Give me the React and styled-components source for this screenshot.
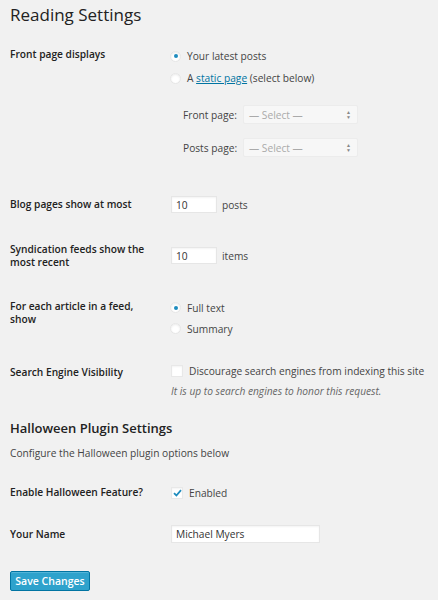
import React from 'react'
import styled, { createGlobalStyle } from 'styled-components'

const GlobalStyle = createGlobalStyle`
  html, body {
    margin: 0;
    background: #f1f1f1;
  }
  body {
    font-family: "Open Sans", "Liberation Sans", sans-serif;
    color: #444;
    font-size: 10.2px;
  }
`

const Page = styled.div`
  padding: 3px 0 10px 10px;
  width: 438px;
  box-sizing: border-box;
`

const Title = styled.h1`
  margin: 0;
  font-size: 17px;
  line-height: 24px;
  font-weight: 400;
  color: #222;
`

const Row = styled.div`
  display: grid;
  grid-template-columns: 161px 1fr;
  align-items: start;
  margin-top: ${({ $top }) => $top}px;
`

const Label = styled.div`
  font-weight: 600;
  color: #222;
  line-height: 13px;
  padding-top: ${({ $pad }) => $pad || 0}px;
  padding-right: 10px;
`

const Field = styled.div`
  display: flex;
  flex-direction: column;
`

const Option = styled.label`
  display: flex;
  align-items: center;
  gap: 6px;
  height: ${({ $h }) => $h || 22}px;
  line-height: 14px;
  white-space: nowrap;
`

const Radio = styled.span`
  width: 11px;
  height: 11px;
  border-radius: 50%;
  background: #fff;
  box-shadow: inset 0 1px 2px rgba(0, 0, 0, 0.08);
  border: 1px solid #e6e6e6;
  margin-left: -1px;
  display: flex;
  align-items: center;
  justify-content: center;
  box-sizing: border-box;

  &::after {
    content: '';
    width: 4px;
    height: 4px;
    border-radius: 50%;
    background: ${({ $checked }) => ($checked ? '#1e8cbe' : 'transparent')};
  }
`

const Check = styled.span`
  width: 12px;
  height: 12px;
  background: #fff;
  border: 1px solid #e8e8e8;
  box-sizing: border-box;
  box-shadow: inset 0 1px 2px rgba(0, 0, 0, 0.05);
  display: flex;
  align-items: center;
  justify-content: center;
`

const Link = styled.a`
  color: #0074a2;
  text-decoration: underline;
`

const SubSelects = styled.div`
  display: flex;
  flex-direction: column;
  gap: 14px;
  margin-top: 16px;
  padding-left: 12px;
`

const SelectRow = styled.div`
  display: flex;
  align-items: center;
`

const SelectLabel = styled.span`
  width: 60px;
`

const Select = styled.div`
  width: 115px;
  height: 19px;
  box-sizing: border-box;
  background: #f7f7f7;
  border: 1px solid #ececec;
  border-radius: 2px;
  display: flex;
  align-items: center;
  justify-content: space-between;
  padding: 0 6px 0 5px;
  color: #aaa;
`

const Arrows = styled.span`
  display: flex;
  flex-direction: column;
  align-items: center;
  gap: 1px;
  color: #888;
  font-size: 5px;
  line-height: 4px;
`

const InlineField = styled.div`
  display: flex;
  align-items: center;
  gap: 5px;
  margin-top: ${({ $top }) => $top || 0}px;
`

const Input = styled.div`
  width: ${({ $w }) => $w}px;
  height: ${({ $h }) => $h || 17}px;
  box-sizing: border-box;
  background: #fff;
  border: 1px solid #e6e6e6;
  box-shadow: inset 0 1px 2px rgba(0, 0, 0, 0.05);
  display: flex;
  align-items: center;
  padding-left: 4px;
  color: #333;
`

const Hint = styled.p`
  margin: 6px 0 0;
  font-style: italic;
  line-height: 14px;
  color: #666;
`

const Heading = styled.h2`
  margin: 21px 0 0;
  font-size: 13px;
  line-height: 18px;
  font-weight: 600;
  color: #222;
`

const Intro = styled.p`
  margin: 10px 0 0;
  line-height: 13px;
`

const Button = styled.button`
  margin-top: 28px;
  width: 80px;
  height: 20px;
  padding: 0;
  background: #2ea2cc;
  border: 1px solid #0074a2;
  border-radius: 2px;
  box-shadow: inset 0 1px 0 rgba(120, 200, 230, 0.5);
  color: #fff;
  font-family: inherit;
  font-size: 10.5px;
  font-weight: 600;
  display: block;
`

const Tick = () => (
  <svg width="9" height="8" viewBox="0 0 9 8">
    <path d="M1 4.2 L3.4 6.5 L8 1.2" fill="none" stroke="#1e8cbe" strokeWidth="1.8" />
  </svg>
)

const App = () => (
  <Page>
    <GlobalStyle />
    <Title>Reading Settings</Title>

    <Row $top={18}>
      <Label $pad={3}>Front page displays</Label>
      <Field>
        <Option><Radio $checked /><span>Your latest posts</span></Option>
        <Option><Radio /><span>A <Link>static page</Link> (select below)</span></Option>
        <SubSelects>
          <SelectRow>
            <SelectLabel>Front page:</SelectLabel>
            <Select>— Select —<Arrows><span>▲</span><span>▼</span></Arrows></Select>
          </SelectRow>
          <SelectRow>
            <SelectLabel>Posts page:</SelectLabel>
            <Select>— Select —<Arrows><span>▲</span><span>▼</span></Arrows></Select>
          </SelectRow>
        </SubSelects>
      </Field>
    </Row>

    <Row $top={39}>
      <Label $pad={2}>Blog pages show at most</Label>
      <InlineField>
        <Input $w={46}>10</Input>posts
      </InlineField>
    </Row>

    <Row $top={30}>
      <Label>Syndication feeds show the most recent</Label>
      <InlineField $top={4}>
        <Input $w={46}>10</Input>items
      </InlineField>
    </Row>

    <Row $top={28}>
      <Label $pad={3}>For each article in a feed, show</Label>
      <Field>
        <Option $h={21}><Radio $checked /><span>Full text</span></Option>
        <Option $h={21}><Radio /><span>Summary</span></Option>
      </Field>
    </Row>

    <Row $top={25}>
      <Label $pad={2}>Search Engine Visibility</Label>
      <Field>
        <Option $h={14}><Check /><span>Discourage search engines from indexing this site</span></Option>
        <Hint>It is up to search engines to honor this request.</Hint>
      </Field>
    </Row>

    <Heading>Halloween Plugin Settings</Heading>
    <Intro>Configure the Halloween plugin options below</Intro>

    <Row $top={26}>
      <Label>Enable Halloween Feature?</Label>
      <Option $h={13}><Check><Tick /></Check><span>Enabled</span></Option>
    </Row>

    <Row $top={26}>
      <Label $pad={3}>Your Name</Label>
      <Input $w={149} $h={18}>Michael Myers</Input>
    </Row>

    <Button>Save Changes</Button>
  </Page>
)

export default App
